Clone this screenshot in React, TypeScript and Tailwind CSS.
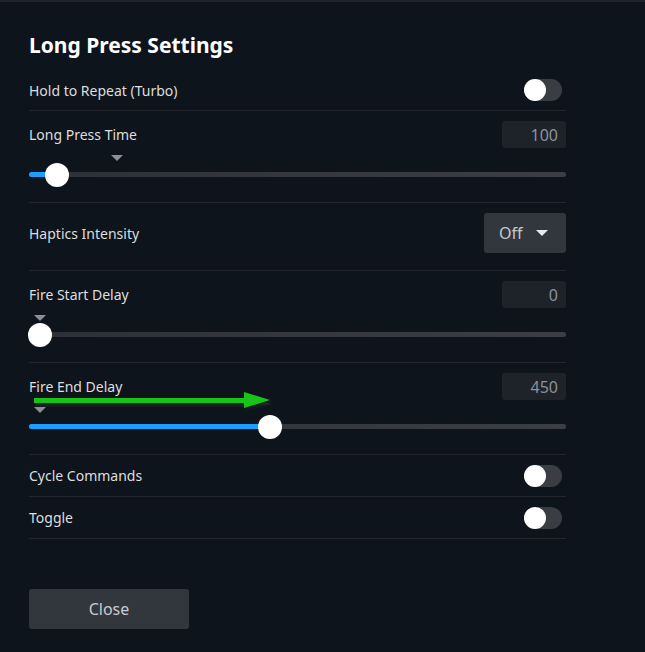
import { useState } from "react";

const FONT = { fontFamily: '"Noto Sans", "Open Sans", sans-serif' };

function Toggle({ on = false }: { on?: boolean }) {
  return (
    <div className="relative h-[22px] w-[38px] rounded-full bg-[#3a3d44]">
      <div
        className={
          on
            ? "absolute right-0 top-0 h-[22px] w-[22px] rounded-full bg-white"
            : "absolute left-0 top-0 h-[22px] w-[22px] rounded-full bg-white"
        }
      />
    </div>
  );
}

function ToggleRow({ label, height }: { label: string; height: string }) {
  return (
    <div className={`flex items-center justify-between border-b border-[#23262d] pr-[4px] ${height}`}>
      <span className="text-[14px] text-[#dcdedf]">{label}</span>
      <Toggle />
    </div>
  );
}

function Tick({ left }: { left: number }) {
  return (
    <div
      className="absolute top-[7px] h-0 w-0 border-x-[6px] border-t-[6px] border-x-transparent border-t-[#8b9096]"
      style={{ left: left - 6 }}
    />
  );
}

function SliderRow({
  label,
  value,
  knob,
  tick,
  children,
}: {
  label: string;
  value: string;
  knob: number;
  tick: number;
  children?: React.ReactNode;
}) {
  return (
    <div className="relative border-b border-[#23262d] pt-[10px]">
      <div className="flex h-[27px] items-center justify-between">
        <span className="text-[14px] text-[#dcdedf]">{label}</span>
        <div className="flex h-[27px] w-[64px] items-center justify-end rounded-[3px] bg-[#1e2229] pr-[8px] text-[16px] text-[#8b929a]">
          {value}
        </div>
      </div>
      <div className="relative h-[54px]">
        <Tick left={tick} />
        <div className="absolute left-0 right-0 top-[24px] h-[5px] rounded-full bg-gradient-to-r from-[#2c3037] to-[#3b3e45]" />
        <div
          className="absolute left-0 top-[24px] h-[5px] rounded-full bg-[#1a9fff]"
          style={{ width: knob }}
        />
        <div
          className="absolute top-[15px] h-[24px] w-[24px] rounded-full bg-white"
          style={{ left: knob - 12 }}
        />
      </div>
      {children}
    </div>
  );
}

function GreenArrow() {
  return (
    <svg
      className="pointer-events-none absolute left-[3px] top-[29px]"
      width="250"
      height="26"
      viewBox="0 0 250 26"
    >
      <defs>
        <linearGradient id="shade" x1="0" y1="0" x2="0" y2="1">
          <stop offset="0" stopColor="#55585d" />
          <stop offset="1" stopColor="#0e141b" stopOpacity="0" />
        </linearGradient>
      </defs>
      <polygon points="2,6 212,6 212,0 238,8 212,16 212,11 2,11" fill="url(#shade)" transform="translate(1,4)" />
      <polygon points="2,6 212,6 212,0 238,8 212,16 212,11 2,11" fill="#17c417" />
    </svg>
  );
}

export default function App() {
  const [open] = useState(true);
  if (!open) return null;
  return (
    <div className="h-[652px] w-[645px] overflow-hidden border-t-2 border-[#1f232b] bg-[#0e141b]" style={FONT}>
      <div className="ml-[29px] w-[537px] pt-[29px]">
        <h1 className="mb-[11px] h-[28px] text-[21px] font-bold leading-[28px] text-white">
          Long Press Settings
        </h1>
        <ToggleRow label="Hold to Repeat (Turbo)" height="h-[41px]" />
        <SliderRow label="Long Press Time" value="100" knob={28} tick={88} />
        <div className="flex items-center justify-between border-b border-[#23262d] pb-[17px] pt-[10px]">
          <span className="text-[14px] text-[#dcdedf]">Haptics Intensity</span>
          <div className="flex h-[40px] w-[82px] items-center gap-[13px] rounded-[3px] bg-[#32363d] pl-[15px] text-[16px] text-[#c6c9cd]">
            <span>Off</span>
            <div className="h-0 w-0 border-x-[6px] border-t-[6px] border-x-transparent border-t-[#e8eaec]" />
          </div>
        </div>
        <SliderRow label="Fire Start Delay" value="0" knob={11} tick={11} />
        <SliderRow label="Fire End Delay" value="450" knob={241} tick={11}>
          <GreenArrow />
        </SliderRow>
        <ToggleRow label="Cycle Commands" height="h-[42px]" />
        <ToggleRow label="Toggle" height="h-[42px]" />
        <button
          type="button"
          className="mt-[50px] h-[40px] w-[160px] rounded-[3px] bg-[#32363d] text-[16px] text-[#c8cbd0]"
        >
          Close
        </button>
      </div>
    </div>
  );
}
